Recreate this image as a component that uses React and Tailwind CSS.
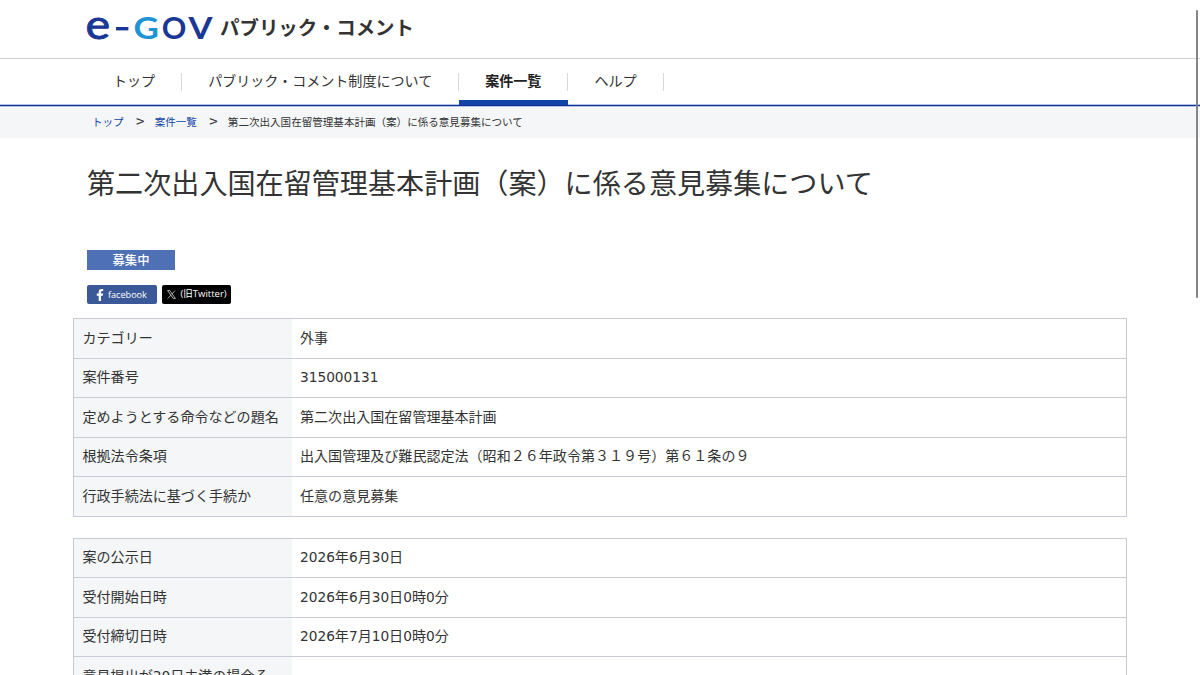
import React from 'react';
import { FaFacebookF } from 'react-icons/fa';

const navItems = [
  { label: 'トップ' },
  { label: 'パブリック・コメント制度について' },
  { label: '案件一覧', active: true },
  { label: 'ヘルプ' },
];

const summaryRows = [
  { label: 'カテゴリー', value: '外事' },
  { label: '案件番号', value: '315000131' },
  { label: '定めようとする命令などの題名', value: '第二次出入国在留管理基本計画' },
  { label: '根拠法令条項', value: '出入国管理及び難民認定法（昭和２６年政令第３１９号）第６１条の９' },
  { label: '行政手続法に基づく手続か', value: '任意の意見募集' },
];

const scheduleRows = [
  { label: '案の公示日', value: '2026年6月30日' },
  { label: '受付開始日時', value: '2026年6月30日0時0分' },
  { label: '受付締切日時', value: '2026年7月10日0時0分' },
  { label: '意見提出が30日未満の場合その理由', value: '' },
];

// Half-width digits use a wider face than the Japanese text
function MixedText({ text }) {
  return text.split(/([0-9]+)/).map((part, i) =>
    /^[0-9]+$/.test(part) ? (
      <span key={i} className="font-['DejaVu_Sans'] text-[13.7px]">{part}</span>
    ) : (
      part
    )
  );
}

function Logo() {
  return (
    <svg width="128" height="30" viewBox="86 14 128 30" className="shrink-0 overflow-visible" fontFamily="Lato, sans-serif" fill="#1a3796">
      <text x="85.4" y="38.8" fontSize="40.5" stroke="#1a3796" strokeWidth="0.9" textLength="24.6" lengthAdjust="spacingAndGlyphs">e</text>
      <rect x="116" y="27" width="12.4" height="3.4" />
      <text x="133.4" y="39.3" fontSize="30" fontWeight="700" fill="#1c94d6" textLength="25.4" lengthAdjust="spacingAndGlyphs">G</text>
      <text x="161.8" y="39.3" fontSize="30" fontWeight="700" textLength="24.6" lengthAdjust="spacingAndGlyphs">O</text>
      <text x="188.4" y="39.3" fontSize="30" fontWeight="700" textLength="24" lengthAdjust="spacingAndGlyphs">V</text>
    </svg>
  );
}

function InfoTable({ rows }) {
  return (
    <dl className="border-x border-t border-[#c9cad6]">
      {rows.map((row) => (
        <div key={row.label} className="flex min-h-[39.55px] border-b border-[#c9cad6]">
          <dt className="w-[218px] shrink-0 bg-[#f4f6f8] pt-[7.5px] pr-2.5 pb-2 pl-[8.5px] leading-[21px]">
            <MixedText text={row.label} />
          </dt>
          <dd className="flex-1 pt-[7.5px] pl-2 leading-[21px]">
            <MixedText text={row.value} />
          </dd>
        </div>
      ))}
    </dl>
  );
}

export default function App() {
  return (
    <div className="relative h-[675px] overflow-hidden bg-white font-['Noto_Sans_CJK_JP',sans-serif] text-[14.06px] text-[#333]">
      <header className="flex h-[59px] items-center border-b border-[#d2d2d2] pl-[86px]">
        <Logo />
        <span className="mb-1 ml-1.5 text-[19.45px] leading-7 font-bold">パブリック・コメント</span>
      </header>

      {/* Navigation */}
      <nav className="relative flex h-[47px] border-b border-[#0f2f96] pl-[87px] shadow-[0_1px_0_#b4c6e4,inset_0_-1px_0_#b4c6e4]">
        {navItems.map((item) => (
          <a
            key={item.label}
            className={`flex flex-col justify-between pt-3.5 ${item.active ? 'font-bold text-[#222]' : ''}`}
          >
            <span className="flex h-[18px] items-center border-r border-[#d8d8d8] px-[26px] pb-0.5 whitespace-nowrap">
              {item.label}
            </span>
            {item.active && <span className="h-[5px] bg-[#1144a6]" />}
          </a>
        ))}
      </nav>

      {/* Breadcrumb */}
      <div className="flex h-8 items-center bg-[#f4f6f8] pb-px pl-[92px] text-[10.55px]">
        <a className="text-[#1144a6]">トップ</a>
        <span className="w-[31px] pl-0.5 text-center text-[15px]">&gt;</span>
        <a className="text-[#1144a6]">案件一覧</a>
        <span className="w-[31px] pl-0.5 text-center text-[15px]">&gt;</span>
        <span>第二次出入国在留管理基本計画（案）に係る意見募集について</span>
      </div>

      <main className="pr-[73px] pl-[73px]">
        <div className="pl-3.5">
          <h1 className="pt-[23px] text-[28.1px] leading-[42px]">第二次出入国在留管理基本計画（案）に係る意見募集について</h1>
          <div className="mt-[47px] flex h-5 w-22 items-center justify-center bg-[#4e70b4] text-[12.3px] font-medium text-white">
            募集中
          </div>
          <div className="mt-[15px] flex gap-[5px] text-white">
            <a className="flex h-[19px] w-[69.5px] items-center rounded-xs bg-[#3b5998] pl-2 font-['Open_Sans'] text-[9.2px] tracking-[-0.05px]">
              <FaFacebookF className="mr-[3px] h-3 w-2.5" />
              facebook
            </a>
            <a className="flex h-[19px] w-[69.5px] items-center rounded-xs bg-black pl-[5px] font-['Open_Sans','Noto_Sans_CJK_JP',sans-serif] text-[9.5px] whitespace-nowrap">
              <svg viewBox="0 0 24 24" className="mr-[5px] h-[9px] w-[9px] shrink-0" fill="none" stroke="currentColor" strokeWidth="1.8">
                <path d="M1.5 1.5h5.8l15 21h-5.8zM21.5 1.5l-9 9.8M10.5 13.5l-8.5 9" />
              </svg>
              (旧Twitter)
            </a>
          </div>
        </div>

        <div className="mt-3.5 space-y-[21px]">
          <InfoTable rows={summaryRows} />
          <InfoTable rows={scheduleRows} />
        </div>
      </main>

      {/* Scroll thumb */}
      <div className="absolute top-2.5 right-[2.5px] h-72 w-[2px] rounded-full bg-[#858585]" />
    </div>
  );
}
